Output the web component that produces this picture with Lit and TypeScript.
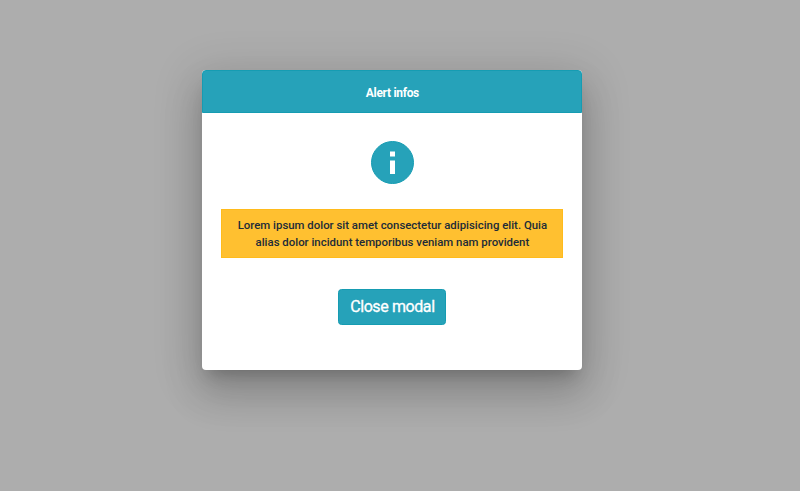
import { LitElement, html, css } from "lit";
import { customElement } from "lit/decorators.js";

@customElement("app-root")
export class AppRoot extends LitElement {
  static styles = css`
    :host {
      display: block;
      height: 100vh;
      overflow: hidden;
      background: #adadad;
      font-family: Roboto, "Liberation Sans", sans-serif;
    }
    .overlay {
      display: flex;
      justify-content: center;
      align-items: flex-start;
      padding: 70.4px 15.2px 0 0;
    }
    .dialog {
      box-sizing: border-box;
      width: 380px;
      height: 299.4px;
      border-radius: 4px;
      background: #fff;
      display: flex;
      flex-direction: column;
      align-items: center;
      box-shadow:
        0 11px 15px -7px rgba(0, 0, 0, 0.2),
        0 24px 38px 3px rgba(0, 0, 0, 0.14),
        0 9px 46px 8px rgba(0, 0, 0, 0.12);
    }
    .header {
      box-sizing: border-box;
      align-self: stretch;
      height: 42.4px;
      border: 1px solid #169cb2;
      border-radius: 4px 4px 0 0;
      background: #26a2b9;
      color: #fff;
      display: flex;
      align-items: center;
      justify-content: center;
      font-size: 12px;
      line-height: 16px;
      letter-spacing: -0.32px;
      font-weight: 700;
      padding-top: 2px;
    }
    .icon {
      display: block;
      width: 43px;
      height: 43px;
      margin-top: 28.5px;
    }
    .message {
      box-sizing: border-box;
      width: 342px;
      height: 49px;
      margin: 24.7px 0 0;
      padding: 7px 12px;
      border: 1px solid #ffbb1c;
      background: #ffc030;
      color: #212b38;
      font-size: 11.4px;
      line-height: 17px;
      font-weight: 500;
      text-align: center;
      white-space: nowrap;
    }
    .close {
      box-sizing: border-box;
      width: 108px;
      height: 36px;
      margin-top: 31px;
      padding: 0;
      border: 1px solid #169cb2;
      border-radius: 3.5px;
      background: #26a2b9;
      color: #fff;
      font: 400 16px/24px Roboto, "Liberation Sans", sans-serif;
      letter-spacing: -0.4px;
      -webkit-text-stroke: 0.3px #fff;
    }
  `;

  render() {
    return html`
      <div class="overlay">
        <div class="dialog" role="dialog" aria-label="Alert infos">
          <div class="header">Alert infos</div>
          <svg class="icon" viewBox="0 0 43 43" aria-hidden="true">
            <circle cx="21.5" cy="21.5" r="21" fill="#26a2b9" stroke="#169cb2" />
            <path d="M19 10.5h5v5h-5zM19 19.5h5v13.5h-5z" fill="#fff" />
          </svg>
          <p class="message">
            Lorem ipsum dolor sit amet consectetur adipisicing elit. Quia<br />
            alias dolor incidunt temporibus veniam nam provident
          </p>
          <button class="close">Close modal</button>
        </div>
      </div>
    `;
  }
}
